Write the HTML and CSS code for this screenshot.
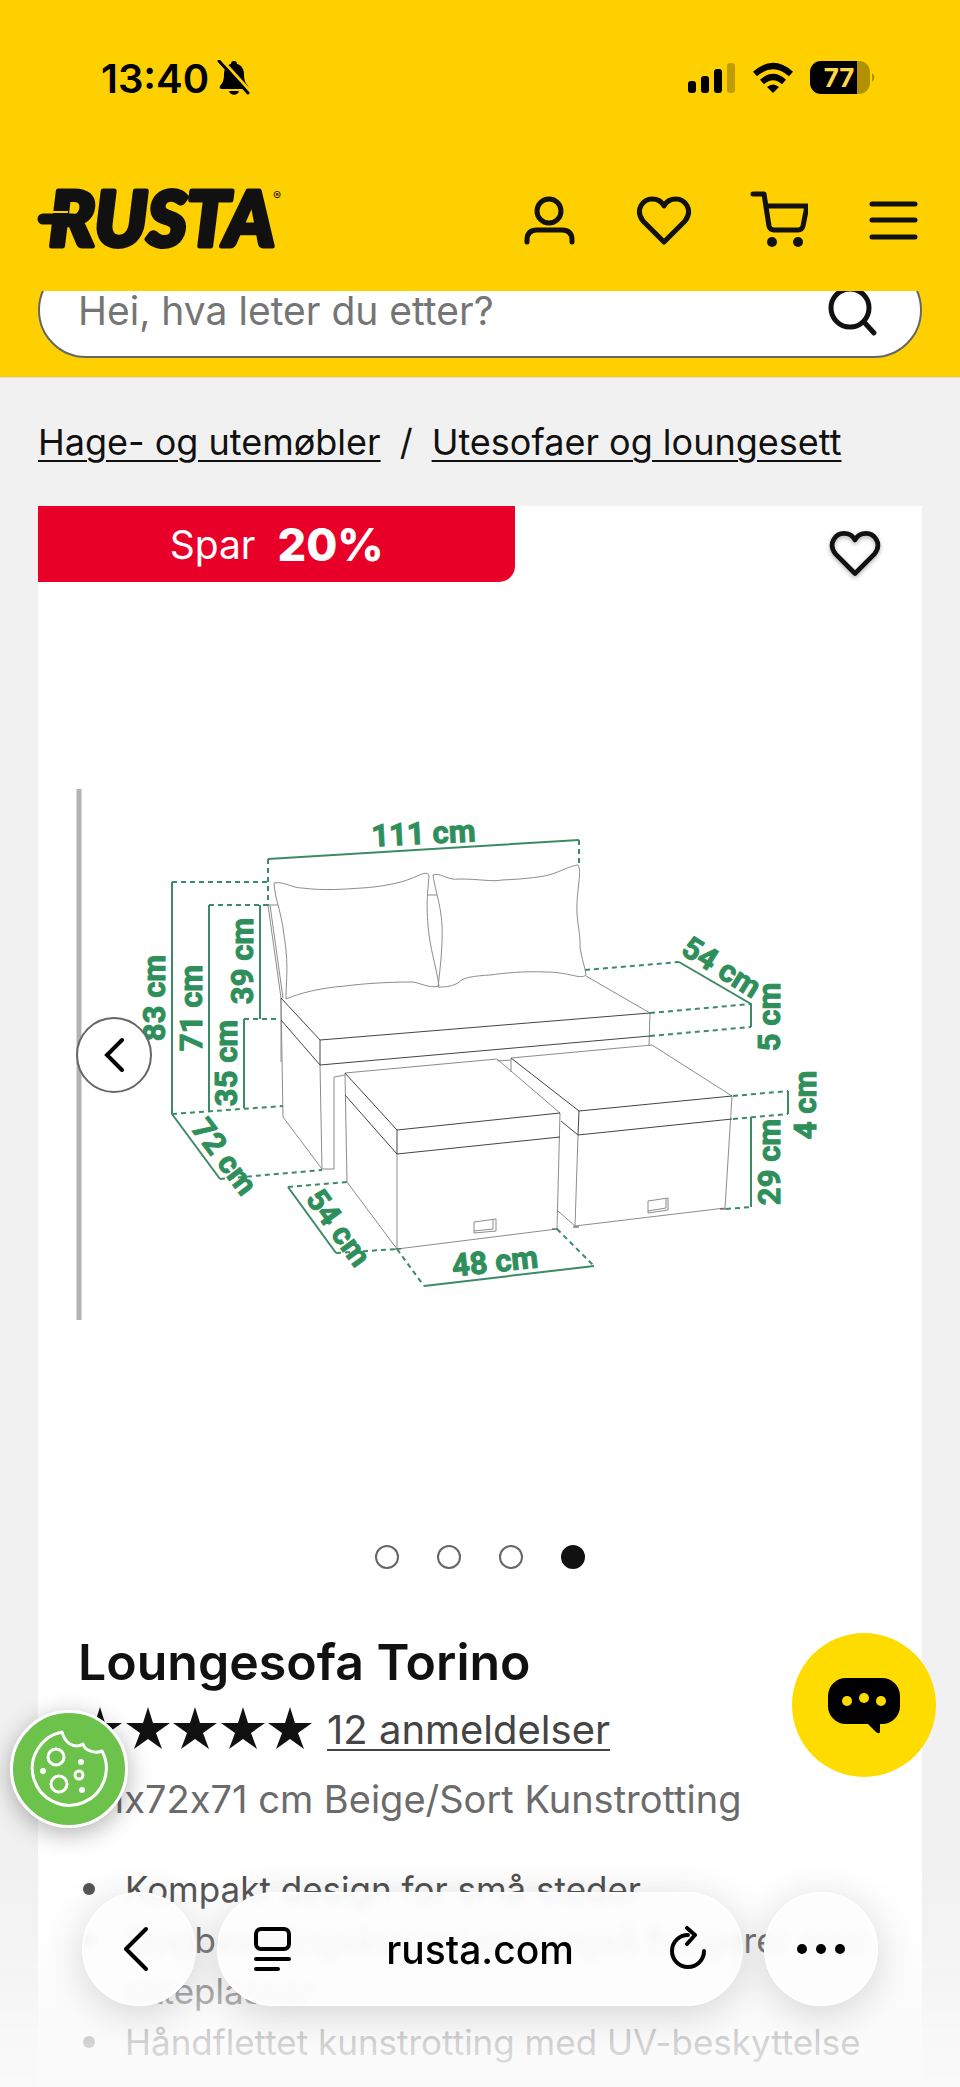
FILE: index.html
```
<!DOCTYPE html>
<html lang="no">
<head>
    <meta charset="UTF-8">
    <meta name="viewport" content="width=device-width, initial-scale=1.0">
    <title>Loungesofa Torino | Rusta</title>
    <link rel="stylesheet" href="styles.css">
</head>
<body>
    <!-- Status bar -->
    <div class="status-bar">
        <div class="status-left">
            <span class="clock">13:40</span>
            <svg width="34" height="36" viewBox="0 0 34 36">
                <path d="M17 1c2 0 3 1 3 3 5 1 7 6 7 10 0 8 2 9 4 12 1 2 0 3-2 3H5c-2 0-3-1-2-3 2-3 4-4 4-12 0-4 2-9 7-10 0-2 1-3 3-3z" fill="#000"/>
                <path d="M12 31h10c-1 5-9 5-10 0z" fill="#000"/>
                <path d="M5 0l29 32" stroke="#ffd000" stroke-width="3"/>
                <path d="M2 1l29 32" stroke="#000" stroke-width="3" stroke-linecap="round"/>
            </svg>
        </div>
        <div class="status-right">
            <svg width="48" height="34" viewBox="0 0 48 34">
                <rect x="0" y="20" width="8" height="12" rx="3"/>
                <rect x="13" y="15" width="8" height="17" rx="3"/>
                <rect x="26" y="8" width="8" height="24" rx="3"/>
                <rect x="39" y="2" width="8" height="30" rx="3" opacity=".25"/>
            </svg>
            <svg width="42" height="34" viewBox="0 0 42 34" fill="none" stroke="#000" stroke-width="6">
                <path d="M3 13Q21-3 39 13"/>
                <path d="M10 21Q21 11 32 21"/>
                <path d="M15 26Q21 21 27 26L21 32z" fill="#000" stroke="none"/>
            </svg>
            <svg class="battery" width="68" height="34" viewBox="0 0 68 34">
                <path d="M47 0h2a11 11 0 0 1 11 11v11a11 11 0 0 1-11 11h-2z" opacity=".3"/>
                <path d="M11 0h36v33H11A11 11 0 0 1 0 22V11A11 11 0 0 1 11 0z"/>
                <path d="M62 12q5 4 0 9z" opacity=".3"/>
                <text x="29" y="26" text-anchor="middle">77</text>
            </svg>
        </div>
    </div>

    <!-- Header -->
    <header class="header">
        <a class="logo" href="#" aria-label="Rusta">
            <svg width="248" height="66" viewBox="0 0 248 66">
                <text class="logo-text" x="11" y="59">RUSTA</text>
                <path d="M5 32h30" stroke="#111" stroke-width="11" stroke-linecap="round"/>
                <path d="M14 25h16" stroke="#ffd000" stroke-width="2"/>
                <text class="logo-mark" x="235" y="13">®</text>
            </svg>
        </a>
        <nav class="header-nav">
            <button class="icon-btn" aria-label="Konto">
                <svg width="58" height="58" viewBox="0 0 58 58">
                    <circle cx="29" cy="20" r="12"/>
                    <path d="M7 51v-2q0-10 10-10h25q10 0 10 10v2"/>
                </svg>
            </button>
            <button class="icon-btn" aria-label="Favoritter">
                <svg width="58" height="58" viewBox="0 0 58 58">
                    <path d="M29 51L8 30C-1 18 9 8 17 8c6 0 10 3 12 7 2-4 6-7 12-7 8 0 18 10 9 22z"/>
                </svg>
            </button>
            <button class="icon-btn" aria-label="Handlekurv">
                <svg width="58" height="58" viewBox="0 0 58 58">
                    <path d="M3 3h11l5 32q1 4 5 4h24q4 0 5-4l4-20H16"/>
                    <circle class="wheel" cx="22" cy="51" r="5"/>
                    <circle class="wheel" cx="48" cy="51" r="5"/>
                </svg>
            </button>
            <button class="icon-btn" aria-label="Meny">
                <svg width="58" height="58" viewBox="0 0 58 58">
                    <path d="M7 13h43M7 29h43M7 46h43"/>
                </svg>
            </button>
        </nav>
    </header>

    <div class="search-area">
        <form class="search">
            <input type="text" placeholder="Hei, hva leter du etter?" aria-label="Søk">
            <button class="icon-btn" type="button" aria-label="Søk">
                <svg width="58" height="58" viewBox="0 0 58 58">
                    <circle cx="26" cy="27" r="19"/>
                    <path d="M40 41l10 11"/>
                </svg>
            </button>
        </form>
    </div>

    <main>
        <div class="breadcrumb">
            <a href="#">Hage- og utemøbler</a>
            <span>/</span>
            <a href="#">Utesofaer og loungesett</a>
        </div>

        <div class="product">
            <div class="product-top">
                <div class="badge">Spar <strong>20%</strong></div>
                <button class="icon-btn wish" aria-label="Legg til favoritter">
                    <svg width="54" height="54" viewBox="0 0 58 58">
                        <path d="M29 51L8 30C-1 18 9 8 17 8c6 0 10 3 12 7 2-4 6-7 12-7 8 0 18 10 9 22z"/>
                    </svg>
                </button>
            </div>

            <!-- Målskisse -->
            <div class="slider">
                <svg class="drawing" viewBox="76 789 808 531">
                    <path class="edge" d="M79 789v531"/>
                    <g class="sofa">
                        <path d="M274 883C284 881 292 888 302 888C325 891 345 889 362 888C380 887 400 883 410 879S428 870 429 876C428 890 426 900 428 925C430 950 436 965 439 986C430 989 418 982 412 982C385 982 360 984 345 986C320 988 300 993 286 999C286 980 289 965 284 935C281 910 275 900 274 883z"/>
                        <path d="M433 875C440 872 448 881 460 879C480 879 492 882 502 880C525 879 545 877 555 873C565 869 574 865 578 865C582 870 577 890 577 905C576 920 581 935 580 947C582 960 585 967 586 975C580 980 570 972 545 972C525 971 505 973 490 975C475 976 463 977 458 983C450 987 445 987 438 987C440 970 443 945 442 925C440 900 436 895 433 875z"/>
                        <path d="M427 895h10M268 905h10M268 905l13 93v64M270 905l13 93"/>
                        <path d="M281 998l2 119 39 52h12v-92l11-2M320 1065l2 104M586 976l64 37-1 33"/>
                        <path class="dark" d="M281 998l39 42 330-27M281 1020l39 45 330-29M320 1040v25"/>
                        <path d="M345 1073l152-14 63 54-3 116-160 20-50-67zM397 1154v95M497 1061l14-1"/>
                        <path class="dark" d="M345 1073l52 57 163-17M345 1095l52 59 163-17M397 1130v24"/>
                        <path d="M511 1072v-14l141-13 80 51-7 112-150 18 3-91M558 1211l17 15"/>
                        <path class="dark" d="M511 1058l68 53 153-15M561 1121l17 14 154-16M579 1111l-1 24"/>
                        <path d="M474 1222l22-3v12l-22 2zM474 1231l19-2v-9M648 1201l20-3v12l-20 3zM648 1211l18-3v-9"/>
                        <path class="dark" d="M395 1249h6M552 1229h6M573 1227h6M720 1209h6"/>
                    </g>
                    <g class="measure">
                        <path d="M268 859l311-19M172 882v232l48 65M209 905v206M260 905v114M244 1019v89M288 1187l48 66M424 1286l170-20M679 962l72 42v23M788 1091v23M751 1117v90"/>
                        <path class="dash" d="M268 859v46M579 840v23M172 882h96M209 905h59M244 1019h36M172 1114l111-8M220 1179l102-9M288 1187l59-5M336 1253l61-4M397 1249l27 37M557 1229l37 37M585 970l94-8M650 1013l101-9M650 1036l101-9M733 1096l55-5M733 1119l55-5M726 1209l25-2"/>
                    </g>
                    <g class="labels">
                        <text transform="translate(424 844) rotate(-3)">111 cm</text>
                        <text transform="translate(165 998) rotate(-90)">83 cm</text>
                        <text transform="translate(202 1008) rotate(-90)">71 cm</text>
                        <text transform="translate(253 961) rotate(-90)">39 cm</text>
                        <text transform="translate(237 1063) rotate(-90)">35 cm</text>
                        <text transform="translate(216 1163) rotate(53)">72 cm</text>
                        <text transform="translate(330 1234) rotate(54)">54 cm</text>
                        <text transform="translate(496 1272) rotate(-6)">48 cm</text>
                        <text transform="translate(716 976) rotate(32)">54 cm</text>
                        <text transform="translate(780 1017) rotate(-90)">5 cm</text>
                        <text transform="translate(816 1105) rotate(-90)">4 cm</text>
                        <text transform="translate(780 1162) rotate(-90)">29 cm</text>
                    </g>
                </svg>
                <button class="prev" aria-label="Forrige bilde">
                    <svg width="24" height="38" viewBox="0 0 24 38"><path d="M20 4L5 19l15 15"/></svg>
                </button>
            </div>

            <div class="dots">
                <button class="dot" aria-label="Bilde 1"></button>
                <button class="dot" aria-label="Bilde 2"></button>
                <button class="dot" aria-label="Bilde 3"></button>
                <button class="dot active" aria-label="Bilde 4"></button>
            </div>

            <div class="info">
                <h1>Loungesofa Torino</h1>
                <div class="rating">
                    <svg width="240" height="46" viewBox="0 0 240 46">
                        <defs>
                            <path id="star" d="M22 1l5 16h17L30 27l6 16-14-10-14 10 6-16L0 17h17z"/>
                        </defs>
                        <use href="#star"/>
                        <use href="#star" x="48"/>
                        <use href="#star" x="95"/>
                        <use href="#star" x="143"/>
                        <use href="#star" x="190"/>
                    </svg>
                    <a href="#">12 anmeldelser</a>
                </div>
                <p class="variant">111x72x71 cm Beige/Sort Kunstrotting</p>
                <ul class="features">
                    <li>Kompakt design for små steder</li>
                    <li>Oppbevaringskasser som også fungerer som sitteplasser</li>
                    <li>Håndflettet kunstrotting med UV-beskyttelse</li>
                </ul>
            </div>
        </div>
    </main>

    <button class="chat" aria-label="Chat">
        <svg width="76" height="60" viewBox="0 0 76 60">
            <path d="M20 3h36a18 18 0 0 1 18 18v10a18 18 0 0 1-18 18h-2v7q0 4-4 1l-8-8H20A18 18 0 0 1 2 31V21A18 18 0 0 1 20 3z"/>
            <g fill="#ffdc00">
                <circle cx="21" cy="26" r="5"/>
                <circle cx="38" cy="23" r="5"/>
                <circle cx="55" cy="26" r="5"/>
            </g>
        </svg>
    </button>

    <button class="cookie" aria-label="Informasjonskapsler">
        <svg width="82" height="82" viewBox="0 0 82 82">
            <path d="M34 4A37 37 0 1 0 74 23Q67 26 60 22Q56 20 55 16Q49 20 42 16Q36 12 34 4z"/>
            <circle cx="28" cy="29" r="8"/>
            <circle cx="31" cy="56" r="8"/>
            <circle cx="51" cy="47" r="4"/>
            <g class="crumb">
                <circle cx="53" cy="34" r="3"/>
                <circle cx="15" cy="43" r="3"/>
                <circle cx="54" cy="62" r="3"/>
            </g>
        </svg>
    </button>

    <!-- Browser toolbar -->
    <div class="fade"></div>
    <div class="toolbar">
        <button class="glass round" aria-label="Tilbake">
            <svg width="32" height="46" viewBox="0 0 32 46"><path d="M23 3L3 23l20 20"/></svg>
        </button>
        <div class="glass address">
            <button aria-label="Sidemeny">
                <svg width="40" height="46" viewBox="0 0 40 46">
                    <rect x="3" y="3" width="33" height="20" rx="5"/>
                    <path d="M3 33h33M3 43h22"/>
                </svg>
            </button>
            <span>rusta.com</span>
            <button aria-label="Last inn på nytt">
                <svg width="40" height="46" viewBox="0 0 40 46">
                    <path d="M21 9A16 16 0 1 0 37 25M20 2l8 7-8 9"/>
                </svg>
            </button>
        </div>
        <button class="glass round" aria-label="Mer">
            <svg class="more" width="50" height="12" viewBox="0 0 50 12">
                <circle cx="6" cy="6" r="5"/>
                <circle cx="25" cy="6" r="5"/>
                <circle cx="44" cy="6" r="5"/>
            </svg>
        </button>
    </div>
</body>
</html>
```
FILE: styles.css
```
* {
    box-sizing: border-box;
}
body {
    margin: 0;
    min-height: 100vh;
    display: flex;
    flex-direction: column;
    background: #f1f1f1;
    color: #111;
    font-family: Inter, "Open Sans", sans-serif;
    font-size: 35px;
}
button {
    padding: 0;
    border: none;
    background: none;
    cursor: pointer;
}
svg {
    display: block;
}
a {
    color: inherit;
    text-decoration-thickness: 2px;
    text-underline-offset: 5px;
}

/* status bar */
.status-bar {
    display: flex;
    align-items: center;
    justify-content: space-between;
    height: 156px;
    padding: 0 82px 0 101px;
    background: #ffd000;
    color: #000;
}
.status-left {
    display: flex;
    align-items: center;
    gap: 8px;
}
.clock {
    font-size: 40px;
    font-weight: 600;
}
.status-right {
    display: flex;
    align-items: center;
    gap: 16px;
}
.battery text {
    fill: #ffd84a;
    font-size: 26px;
    font-weight: 700;
}

/* header */
.header {
    display: flex;
    align-items: center;
    justify-content: space-between;
    height: 135px;
    padding: 0 37px 8px 38px;
    background: #ffd000;
}
.logo svg {
    overflow: visible;
}
.logo-text {
    font-family: Lato, sans-serif;
    font-size: 76px;
    font-weight: 900;
    font-style: italic;
    fill: #111;
    stroke: #111;
    stroke-width: 5px;
    stroke-linejoin: round;
}
.logo-mark {
    font-size: 12px;
    fill: #111;
}
.header-nav {
    display: flex;
    gap: 57px;
}
.icon-btn svg {
    fill: none;
    stroke: #111;
    stroke-width: 5px;
    stroke-linecap: round;
    stroke-linejoin: round;
}
.icon-btn .wheel {
    fill: #111;
    stroke: none;
}

/* the search box is scrolled partly under the header */
.search-area {
    height: 87px;
    padding: 0 38px;
    background: #ffd000;
    border-bottom: 1px solid #ddd;
    overflow: hidden;
}
.search {
    display: flex;
    align-items: center;
    height: 96px;
    margin-top: -29px;
    padding: 0 38px;
    background: #fff;
    border: 2px solid #666;
    border-radius: 48px;
}
.search input {
    flex: 1;
    min-width: 0;
    padding: 0;
    border: none;
    outline: none;
    background: none;
    font: inherit;
    font-size: 39px;
}
.search input::placeholder {
    color: #757575;
    opacity: 1;
}

main {
    flex: 1;
    display: flex;
    flex-direction: column;
    padding: 0 38px;
}
.breadcrumb {
    display: flex;
    align-items: center;
    gap: 19px;
    height: 128px;
    font-size: 36px;
}

/* product card */
.product {
    flex: 1;
    background: #fff;
}
.product-top {
    display: flex;
    justify-content: space-between;
    align-items: flex-start;
    height: 283px;
}
.badge {
    display: flex;
    align-items: center;
    justify-content: center;
    gap: 22px;
    width: 54%;
    height: 76px;
    background: #e90029;
    color: #fff;
    font-size: 39px;
    border-radius: 0 0 16px 0;
}
.badge strong {
    font-size: 45px;
    font-weight: 800;
}
.wish {
    margin: 20px 40px 0 0;
    filter: drop-shadow(0 2px 2px rgba(0, 0, 0, 0.3));
}
.slider {
    position: relative;
    margin: 0 38px;
}
.drawing {
    width: 100%;
}
.edge {
    stroke: #b3b3b3;
    stroke-width: 5px;
}
.sofa path {
    fill: none;
    stroke: #8c8c8c;
    stroke-width: 1px;
}
.sofa .dark {
    stroke: #444;
}
.measure path {
    fill: none;
    stroke: #3d8b66;
    stroke-width: 2px;
}
.measure .dash {
    stroke-dasharray: 5 4;
}
.labels {
    fill: #2f8f5b;
    stroke: #2f8f5b;
    stroke-width: 1px;
    font-family: Roboto, sans-serif;
    font-size: 31px;
    font-weight: 700;
    text-anchor: middle;
}
.prev {
    position: absolute;
    left: 0;
    top: 50%;
    transform: translateY(-50%);
    display: flex;
    align-items: center;
    justify-content: center;
    width: 76px;
    height: 76px;
    background: #fff;
    border: 2px solid #666;
    border-radius: 50%;
}
.prev svg {
    fill: none;
    stroke: #000;
    stroke-width: 4px;
    stroke-linecap: round;
}
.dots {
    display: flex;
    justify-content: center;
    gap: 38px;
    margin-top: 225px;
}
.dot {
    width: 24px;
    height: 24px;
    border: 2px solid #666;
    border-radius: 50%;
}
.dot.active {
    background: #111;
    border-color: #111;
}

.info {
    padding: 63px 40px 0;
}
h1 {
    margin: 0;
    font-size: 50px;
    line-height: 60px;
    font-weight: 600;
}
.rating {
    display: flex;
    align-items: center;
    gap: 9px;
    height: 74px;
    color: #444;
    font-size: 40px;
}
.rating svg {
    fill: #111;
}
.variant {
    margin: 0;
    color: #6b6b6b;
    font-size: 38px;
    line-height: 66px;
    /* keep the plain x between the numbers */
    font-feature-settings: "calt" 0;
}
.features {
    margin: 32px 0 0;
    padding: 0;
    list-style: none;
    color: #444;
    line-height: 51px;
}
.features li {
    position: relative;
    padding-left: 47px;
}
.features li::before {
    content: "";
    position: absolute;
    left: 5px;
    top: 19px;
    width: 12px;
    height: 12px;
    background: #444;
    border-radius: 50%;
}

/* floating buttons */
.chat {
    position: fixed;
    right: 24px;
    bottom: 310px;
    display: flex;
    align-items: center;
    justify-content: center;
    width: 144px;
    height: 144px;
    background: #ffdc00;
    border-radius: 50%;
}
.cookie {
    position: fixed;
    left: 10px;
    bottom: 259px;
    display: flex;
    align-items: center;
    justify-content: center;
    width: 118px;
    height: 118px;
    background: #6cc24a;
    border: 3px solid #fff;
    border-radius: 50%;
    box-shadow: 0 6px 24px rgba(0, 0, 0, 0.3);
}
.cookie svg {
    fill: none;
    stroke: #fff;
    stroke-width: 3px;
    stroke-linejoin: round;
}
.cookie .crumb {
    fill: #fff;
    stroke: none;
}

/* browser toolbar */
.fade {
    position: fixed;
    left: 0;
    right: 0;
    bottom: 0;
    height: 230px;
    background: linear-gradient(rgba(250, 250, 250, 0), rgba(250, 250, 250, 0.2) 30%, rgba(250, 250, 250, 0.75) 75%, rgba(250, 250, 250, 0.9));
    pointer-events: none;
}
.toolbar {
    position: fixed;
    left: 82px;
    right: 82px;
    bottom: 81px;
    display: flex;
    gap: 21px;
}
.glass {
    height: 114px;
    background: rgba(253, 253, 253, 0.93);
    border: 2px solid #fff;
    border-radius: 57px;
    box-shadow: 0 8px 40px rgba(0, 0, 0, 0.16);
    backdrop-filter: blur(4px);
}
.glass svg {
    fill: none;
    stroke: #000;
    stroke-width: 4px;
    stroke-linecap: round;
    stroke-linejoin: round;
}
.round {
    display: flex;
    align-items: center;
    justify-content: center;
    width: 114px;
}
.glass .more {
    fill: #000;
    stroke: none;
}
.address {
    flex: 1;
    display: flex;
    align-items: center;
    justify-content: space-between;
    padding: 0 34px;
    color: #000;
    font-size: 39px;
    font-weight: 500;
}
```
